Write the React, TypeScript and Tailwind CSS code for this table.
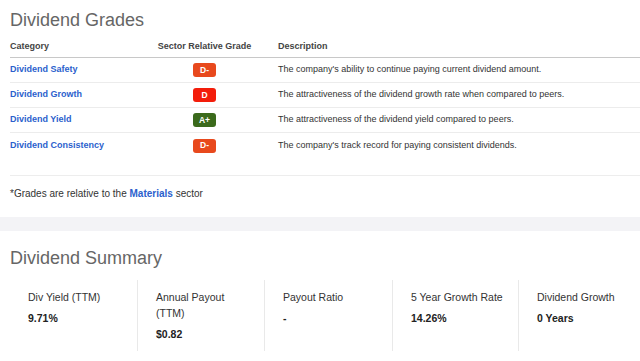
import React from 'react';

const grades = [
  { name: 'Dividend Safety', grade: 'D-', color: 'bg-[#e8491d]', text: "The company's ability to continue paying current dividend amount." },
  { name: 'Dividend Growth', grade: 'D', color: 'bg-[#f31d0b]', text: 'The attractiveness of the dividend growth rate when compared to peers.' },
  { name: 'Dividend Yield', grade: 'A+', color: 'bg-[#3b6a1c]', text: 'The attractiveness of the dividend yield compared to peers.' },
  { name: 'Dividend Consistency', grade: 'D-', color: 'bg-[#e8491d]', text: "The company's track record for paying consistent dividends." },
];

const summary = [
  { label: ['Div Yield (TTM)'], value: '9.71%', w: 'w-[127px]' },
  { label: ['Annual Payout', '(TTM)'], value: '$0.82', w: 'w-[127px]' },
  { label: ['Payout Ratio'], value: '-', w: 'w-[128px]' },
  { label: ['5 Year Growth Rate'], value: '14.26%', w: 'w-[126px]' },
  { label: ['Dividend Growth'], value: '0 Years', w: 'flex-1' },
];

const App: React.FC = () => {
  return (
    <div className="w-[640px] h-[361px] overflow-hidden bg-white font-['Liberation_Sans',Arial,sans-serif]">
      {/* Dividend grades */}
      <section className="pl-[10px]">
        <h2 className="pt-[8px] text-[18px] leading-[24px] text-[#666] mb-[5px]">Dividend Grades</h2>

        <div className="flex h-[21px] items-center border-b border-[#c8c8c8] text-[9px] font-bold text-[#444]">
          <div className="w-[140px]">Category</div>
          <div className="w-[109px] text-center">Sector Relative Grade</div>
          <div className="pl-[19px]">Description</div>
        </div>

        {grades.map((row, index) => (
          <div
            key={row.name}
            className={`flex h-[25px] items-center text-[9px] ${index < grades.length - 1 ? 'border-b border-[#ececec]' : ''}`}
          >
            <div className="w-[140px] font-bold text-[#2c5fcd]">{row.name}</div>
            <div className="w-[109px] flex justify-center">
              <span className={`${row.color} w-[23px] h-[14px] rounded-[3px] flex items-center justify-center text-white font-bold text-[8.5px]`}>
                {row.grade}
              </span>
            </div>
            <div className="pl-[19px] text-[#333] whitespace-nowrap">{row.text}</div>
          </div>
        ))}

        <div className="mt-[17px] border-t border-[#ededed] pt-[11px] pb-[16px] text-[10px] leading-[14px] text-[#333]">
          *Grades are relative to the <span className="font-bold text-[#2c5fcd]">Materials</span> sector
        </div>
      </section>

      <div className="h-[14px] bg-[#f3f3f6]" />

      {/* Dividend summary */}
      <section className="pl-[10px]">
        <h2 className="pt-[15px] text-[18px] leading-[24px] text-[#666]">Dividend Summary</h2>
        <div className="mt-[10px] flex">
          {summary.map((item, index) => (
            <div
              key={item.value}
              className={`${item.w} h-[71px] pt-[9px] pl-[18px] text-[10.5px] leading-[16px] text-[#333] whitespace-nowrap ${index > 0 ? 'border-l border-[#e9e9e9]' : ''}`}
            >
              {item.label.map((line) => (
                <div key={line}>{line}</div>
              ))}
              <div className="mt-[5px] font-bold text-[#222]">{item.value}</div>
            </div>
          ))}
        </div>
      </section>
    </div>
  );
};

export default App;
